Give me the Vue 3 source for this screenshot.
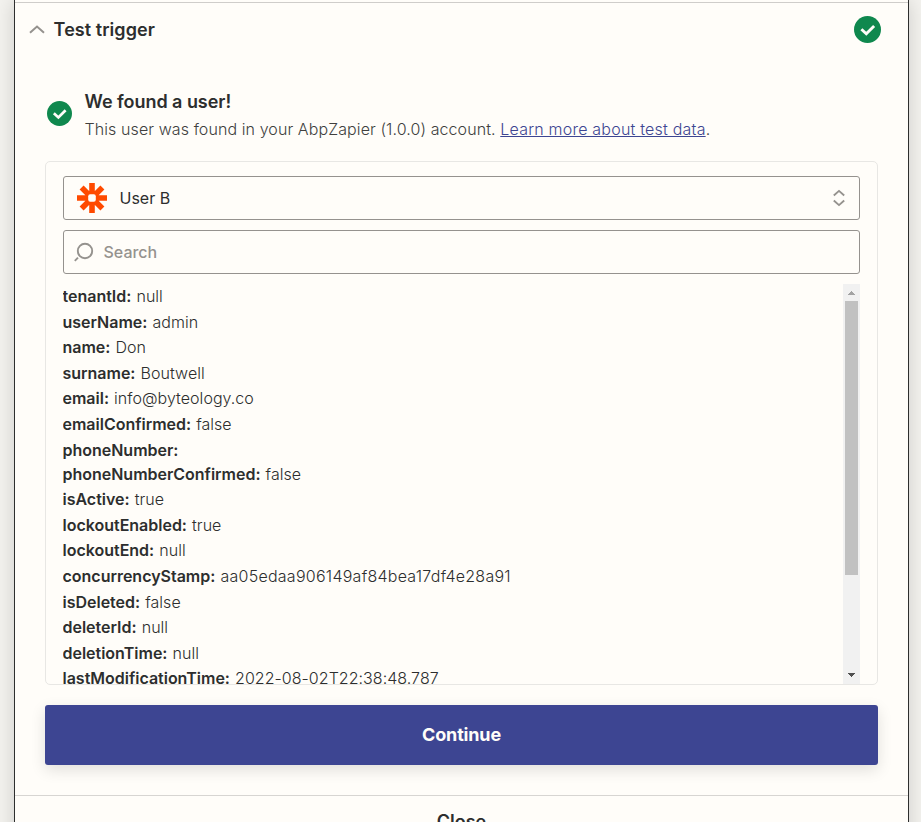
<script setup>
const fields = [
  ['tenantId', 'null'],
  ['userName', 'admin'],
  ['name', 'Don'],
  ['surname', 'Boutwell'],
  ['email', 'info@byteology.co'],
  ['emailConfirmed', 'false'],
  ['phoneNumber', ''],
  ['phoneNumberConfirmed', 'false'],
  ['isActive', 'true'],
  ['lockoutEnabled', 'true'],
  ['lockoutEnd', 'null'],
  ['concurrencyStamp', 'aa05edaa906149af84bea17df4e28a91'],
  ['isDeleted', 'false'],
  ['deleterId', 'null'],
  ['deletionTime', 'null'],
  ['lastModificationTime', '2022-08-02T22:38:48.787'],
]
</script>

<template>
  <div class="stage">
    <main class="panel">
      <header class="head">
        <svg class="chevron" width="16" height="10" viewBox="0 0 16 10"><path d="M1 7.800 8 1.600l7 6.200" fill="none" stroke="#95928e" stroke-width="2" /></svg>
        <h2>Test trigger</h2>
        <svg class="check-lg" width="27" height="27" viewBox="0 0 27 27"><circle cx="13.500" cy="13.500" r="13.500" fill="#0f884e" /><path d="M7.400 13.200l4.900 4.600 7.800-7.800" fill="none" stroke="#fffdf9" stroke-width="2.900" /></svg>
      </header>

      <section class="found">
        <svg class="check-sm" width="25" height="25" viewBox="0 0 27 27"><circle cx="13.500" cy="13.500" r="13.500" fill="#0f884e" /><path d="M7.400 13.200l4.900 4.600 7.800-7.800" fill="none" stroke="#fffdf9" stroke-width="2.900" /></svg>
        <div>
          <h3>We found a user!</h3>
          <p>This user was found in your AbpZapier (1.0.0) account. <a>Learn more about test data</a>.</p>
        </div>
      </section>

      <section class="card">
        <div class="box">
          <svg class="logo" width="30" height="30" viewBox="0 0 30 30">
            <g stroke="#ff4a00" stroke-width="5.600">
              <path d="M15 0v10M15 20v10M0 15h10M20 15h10M4.600 4.600l7 7M18.400 18.400l7 7M25.400 4.600l-7 7M11.600 18.400l-7 7" />
            </g>
            <rect x="9.300" y="9.300" width="11.400" height="11.400" rx="3" fill="#ff4a00" />
            <rect x="11.200" y="11.200" width="7.600" height="7.600" rx="2" fill="#fffdf9" />
          </svg>
          <span class="chosen">User B</span>
          <svg class="updown" width="12" height="18" viewBox="0 0 12 18"><path d="M.8 6.500 6 1.900l5.200 4.600M.8 11.500 6 16.100l5.200-4.600" fill="none" stroke="#95928e" stroke-width="1.900" /></svg>
        </div>
        <div class="box">
          <svg class="lens" width="20" height="20" viewBox="0 0 20 20"><g fill="none" stroke="#95928e" stroke-width="1.900"><circle cx="11" cy="9" r="7.200" /><path d="M.8 18.800 4 15.600" /></g></svg>
          <span class="hint">Search</span>
        </div>
        <div class="results">
          <ul>
            <li v-for="[key, value] in fields" :key="key" :class="{ blank: !value, hash: key === 'concurrencyStamp' }">
              <b>{{ key }}:</b> <span>{{ value }}</span>
            </li>
          </ul>
          <div class="scrollbar">
            <svg width="17" height="17" viewBox="0 0 17 17" shape-rendering="crispEdges"><path d="M5 11h7L8.500 7z" fill="#a3a3a3" /></svg>
            <div class="track"><div class="thumb"></div></div>
            <svg width="17" height="17" viewBox="0 0 17 17" shape-rendering="crispEdges"><path d="M5 6h7l-3.500 4z" fill="#505050" /></svg>
          </div>
        </div>
      </section>

      <button class="continue">Continue</button>
      <footer>Close</footer>
    </main>
  </div>
</template>

<style>
body {
  overflow: hidden;
}
</style>

<style scoped>
.stage {
  height: 822px;
  overflow: hidden;
  background: #f4f3ef;
  font-family: Inter, sans-serif;
  font-size: 16px;
  color: #2d2e2e;
}
.panel {
  box-sizing: border-box;
  width: 895px;
  height: 850px;
  margin-left: 14px;
  border: solid #2d2e2e;
  border-width: 0 1px;
  background: #fffdf9;
  box-shadow: 0 0 20px rgba(0, 0, 0, 0.16);
  padding-top: 2px;
}
.head {
  display: flex;
  align-items: center;
  height: 54px;
  padding: 0 27px 0 14px;
  border-top: 1px solid #cfcdca;
  box-sizing: border-box;
}
.check-lg {
  margin-bottom: 1px;
}
h2,
h3,
p,
ul {
  margin: 0;
  padding: 0;
}
h2 {
  flex: 1;
  margin-left: 8.6px;
  font-size: 18px;
  line-height: 24px;
  font-weight: 600;
  letter-spacing: 0.06px;
}
.found {
  display: flex;
  align-items: center;
  gap: 12.5px;
  margin: 33px 0 0 32px;
  height: 50px;
}
.check-sm {
  margin-bottom: 1px;
}
.found > div {
  padding-top: 4px;
}
h3 {
  font-size: 18px;
  line-height: 26px;
  font-weight: 600;
  letter-spacing: -0.04px;
}
p {
  font-size: 16px;
  line-height: 28px;
  font-weight: 350;
  letter-spacing: 0.09px;
  color: #403f3e;
}
a {
  color: #3d4592;
  text-decoration: underline;
  letter-spacing: 0.21px;
}
.card {
  box-sizing: border-box;
  height: 524px;
  margin: 22px 30px 0;
  padding: 14px 17px 0;
  border: 1px solid #e8e7e4;
  border-radius: 5px;
}
.box {
  box-sizing: border-box;
  display: flex;
  align-items: center;
  height: 44px;
  margin-bottom: 10px;
  padding: 0 14px 0 13px;
  border: 1px solid #95928e;
  border-radius: 3px;
}
.chosen {
  flex: 1;
  margin-left: 12.5px;
}
.lens {
  margin-left: -3px;
}
.hint {
  margin-left: 9.5px;
  font-weight: 450;
  color: #95928e;
}
.results {
  display: flex;
  justify-content: space-between;
  height: 400px;
  overflow: hidden;
}
li {
  height: 25.6px;
  line-height: 25.6px;
  list-style: none;
  white-space: nowrap;
}
.blank {
  height: 24px;
}
ul {
  margin-left: -0.5px;
}
b {
  font-weight: 600;
  letter-spacing: -0.01px;
}
li span {
  margin-left: 0.6px;
  font-weight: 300;
  letter-spacing: 0.04px;
}
.hash span {
  letter-spacing: 0.26px;
}
.scrollbar {
  display: flex;
  flex-direction: column;
  width: 17px;
  background: #f1f1f1;
}
.scrollbar svg {
  display: block;
}
.track {
  flex: 1;
  padding: 0 2px;
}
.thumb {
  height: 274px;
  background: #c1c1c1;
}
.continue {
  display: block;
  width: 833px;
  height: 60px;
  margin: 20px 30px 30px;
  border: 0;
  border-radius: 3px;
  background: #3d4592;
  box-shadow: 0 5px 15px rgba(0, 0, 0, 0.12);
  color: #fffdf9;
  font: 700 18px/24px Inter, sans-serif;
  letter-spacing: -0.15px;
}
footer {
  padding-top: 14px;
  border-top: 1px solid #d7d5d2;
  text-align: center;
  font-size: 18px;
  line-height: 24px;
  font-weight: 600;
}
</style>
